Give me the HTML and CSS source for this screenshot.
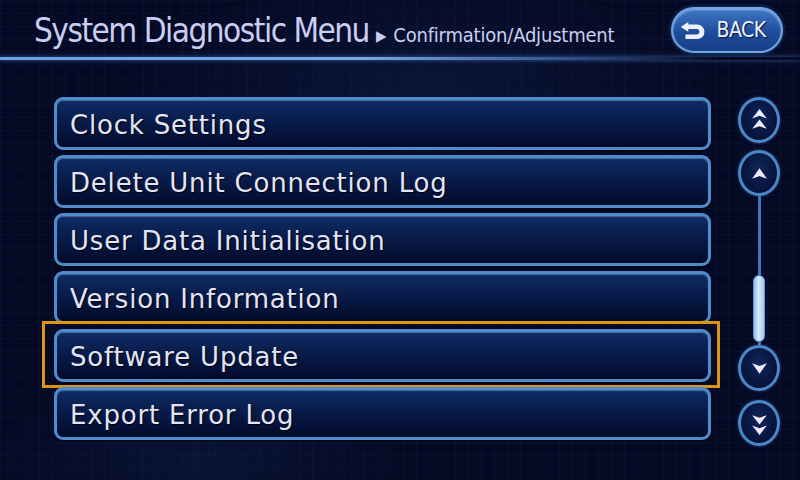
FILE: index.html
```html
<!DOCTYPE html>
<html>
<head>
<meta charset="utf-8">
<link rel="stylesheet" href="styles.css">
</head>
<body>
<div class="screen">
  <header class="topbar">
    <div class="crumbs">
      <span class="title">System Diagnostic Menu</span>
      <span class="sep">&#9654;</span>
      <span class="sub">Confirmation/Adjustment</span>
    </div>
    <button class="back">
      <svg class="back-icon" viewBox="0 0 28 18" width="27" height="17">
        <path d="M0.5 5.2 L8.5 0 L8.5 2.7 H18 A7.6 7.6 0 0 1 18 18 H5.5 V13.2 H18 A2.9 2.9 0 0 0 18 7.5 H8.5 V10.4 Z" fill="#eef0ff"/>
      </svg>
      <span>BACK</span>
    </button>
  </header>
  <div class="hline"></div>
  <main class="content">
    <ul class="menu">
      <li class="item">Clock Settings</li>
      <li class="item">Delete Unit Connection Log</li>
      <li class="item">User Data Initialisation</li>
      <li class="item">Version Information</li>
      <li class="item focused">Software Update</li>
      <li class="item">Export Error Log</li>
    </ul>
    <div class="scroller">
      <div class="sbtn">
        <svg viewBox="0 0 16 22" width="17" height="23"><path d="M8 0 L15 9 L8 6.5 L1 9 Z M8 10 L15 19 L8 16.5 L1 19 Z" fill="#ecebff"/></svg>
      </div>
      <div class="sbtn">
        <svg viewBox="0 0 16 12" width="17" height="13"><path d="M8 1 L15 11 L8 8.3 L1 11 Z" fill="#ecebff"/></svg>
      </div>
      <div class="track">
        <div class="rail"></div>
        <div class="thumb"></div>
        <div class="rail tail"></div>
      </div>
      <div class="sbtn">
        <svg viewBox="0 0 16 12" width="17" height="13"><path d="M8 11 L15 1 L8 3.7 L1 1 Z" fill="#ecebff"/></svg>
      </div>
      <div class="sbtn">
        <svg viewBox="0 0 16 22" width="17" height="23"><path d="M8 12 L15 3 L8 5.5 L1 3 Z M8 22 L15 13 L8 15.5 L1 13 Z" fill="#ecebff"/></svg>
      </div>
    </div>
  </main>
</div>
</body>
</html>
```
FILE: styles.css
```css
html, body {
  margin: 0;
  padding: 0;
}
body {
  width: 800px;
  height: 480px;
  overflow: hidden;
  background-color: #050a24;
  font-family: "DejaVu Sans Condensed", "DejaVu Sans", sans-serif;
}
.screen {
  width: 800px;
  height: 480px;
  background-color: #050a24;
  background-image:
    radial-gradient(ellipse 420px 160px at 420px 90px, rgba(30, 60, 130, 0.2), transparent 70%),
    radial-gradient(ellipse 300px 120px at 200px 460px, rgba(30, 60, 130, 0.18), transparent 70%),
    linear-gradient(rgba(60, 90, 160, 0.07) 1px, transparent 1px),
    linear-gradient(90deg, rgba(60, 90, 160, 0.07) 1px, transparent 1px);
  background-size: auto, auto, 13px 13px, 13px 13px;
}
.topbar {
  height: 57px;
  display: flex;
  align-items: flex-start;
  justify-content: space-between;
  padding: 0 17px 0 34px;
  box-sizing: border-box;
}
.crumbs {
  display: flex;
  align-items: baseline;
  flex-shrink: 0;
  white-space: nowrap;
  padding-top: 11px;
  color: #c9cff2;
}
.title {
  font-size: 33px;
  letter-spacing: -1.5px;
}
.sep {
  font-size: 15px;
  margin: 0 7px 0 7px;
  position: relative;
  top: -1px;
}
.sub {
  font-size: 20px;
  letter-spacing: -0.2px;
}
.back {
  flex-shrink: 0;
  margin-top: 7px;
  width: 112px;
  height: 46px;
  border-radius: 23px;
  border: 2px solid #6ea6e4;
  background: linear-gradient(#3f78c8, #1d4c9a 55%, #173f86);
  box-shadow: 0 0 4px rgba(60, 120, 220, 0.6), inset 0 1px 2px rgba(200, 225, 255, 0.6);
  display: flex;
  align-items: center;
  justify-content: center;
  gap: 9px;
  padding: 0 8px 0 0;
  color: #eef0ff;
  font-family: "DejaVu Sans Condensed", sans-serif;
  font-size: 21px;
  letter-spacing: -0.5px;
  text-shadow: 1px 1px 1px #0a1840;
}
.back-icon {
  display: block;
}
.hline {
  height: 3px;
  background: linear-gradient(90deg, #6b9fe6 0%, #78a8e6 45%, rgba(90, 140, 220, 0.5) 72%, rgba(90, 140, 220, 0) 90%);
  box-shadow: 0 0 4px rgba(80, 140, 230, 0.7);
}
.content {
  display: flex;
  padding: 37px 0 0 54px;
  gap: 27px;
}
.menu {
  list-style: none;
  margin: 0;
  padding: 0;
  width: 657px;
  display: flex;
  flex-direction: column;
  gap: 5px;
}
.item {
  position: relative;
  height: 53px;
  box-sizing: border-box;
  border: 3px solid #4e8ccc;
  border-radius: 9px;
  background: linear-gradient(#0f2c64, #081a48 50%, #030a2a);
  box-shadow: inset 0 1px 1px rgba(160, 200, 255, 0.4), 0 1px 2px rgba(0, 0, 0, 0.6);
  display: flex;
  align-items: center;
  padding: 3px 0 0 13px;
  color: #e2e5f6;
  font-family: "DejaVu Sans", sans-serif;
  font-size: 26px;
  letter-spacing: 0.8px;
  text-shadow: 1px 1px 1px #01030f;
}
.item.focused::after {
  content: "";
  position: absolute;
  top: -11px;
  left: -15px;
  right: -12px;
  bottom: -9px;
  border: 3px solid #df9418;
}
.scroller {
  width: 42px;
  display: flex;
  flex-direction: column;
  align-items: center;
}
.sbtn {
  width: 42px;
  height: 46px;
  box-sizing: border-box;
  border-radius: 50%;
  border: 3px solid #4a88c8;
  background: radial-gradient(ellipse at 50% 40%, #10265a, #06123a 70%);
  box-shadow: 0 0 3px rgba(70, 130, 210, 0.5);
  display: flex;
  align-items: center;
  justify-content: center;
  margin-bottom: 7px;
}
.sbtn:nth-child(2) {
  margin-bottom: 0;
}
.sbtn:nth-child(4) {
  margin-bottom: 9px;
}
.track {
  height: 149px;
  display: flex;
  flex-direction: column;
  align-items: center;
}
.rail {
  flex: 1;
  width: 3px;
  background: #3d78bd;
}
.rail.tail {
  flex: 0 0 3px;
}
.thumb {
  width: 12px;
  height: 67px;
  box-sizing: border-box;
  border-radius: 6px;
  border: 1px solid #5f96d4;
  background: linear-gradient(90deg, #8ebcea, #d4eaff 45%, #a6cbf0);
}
```
